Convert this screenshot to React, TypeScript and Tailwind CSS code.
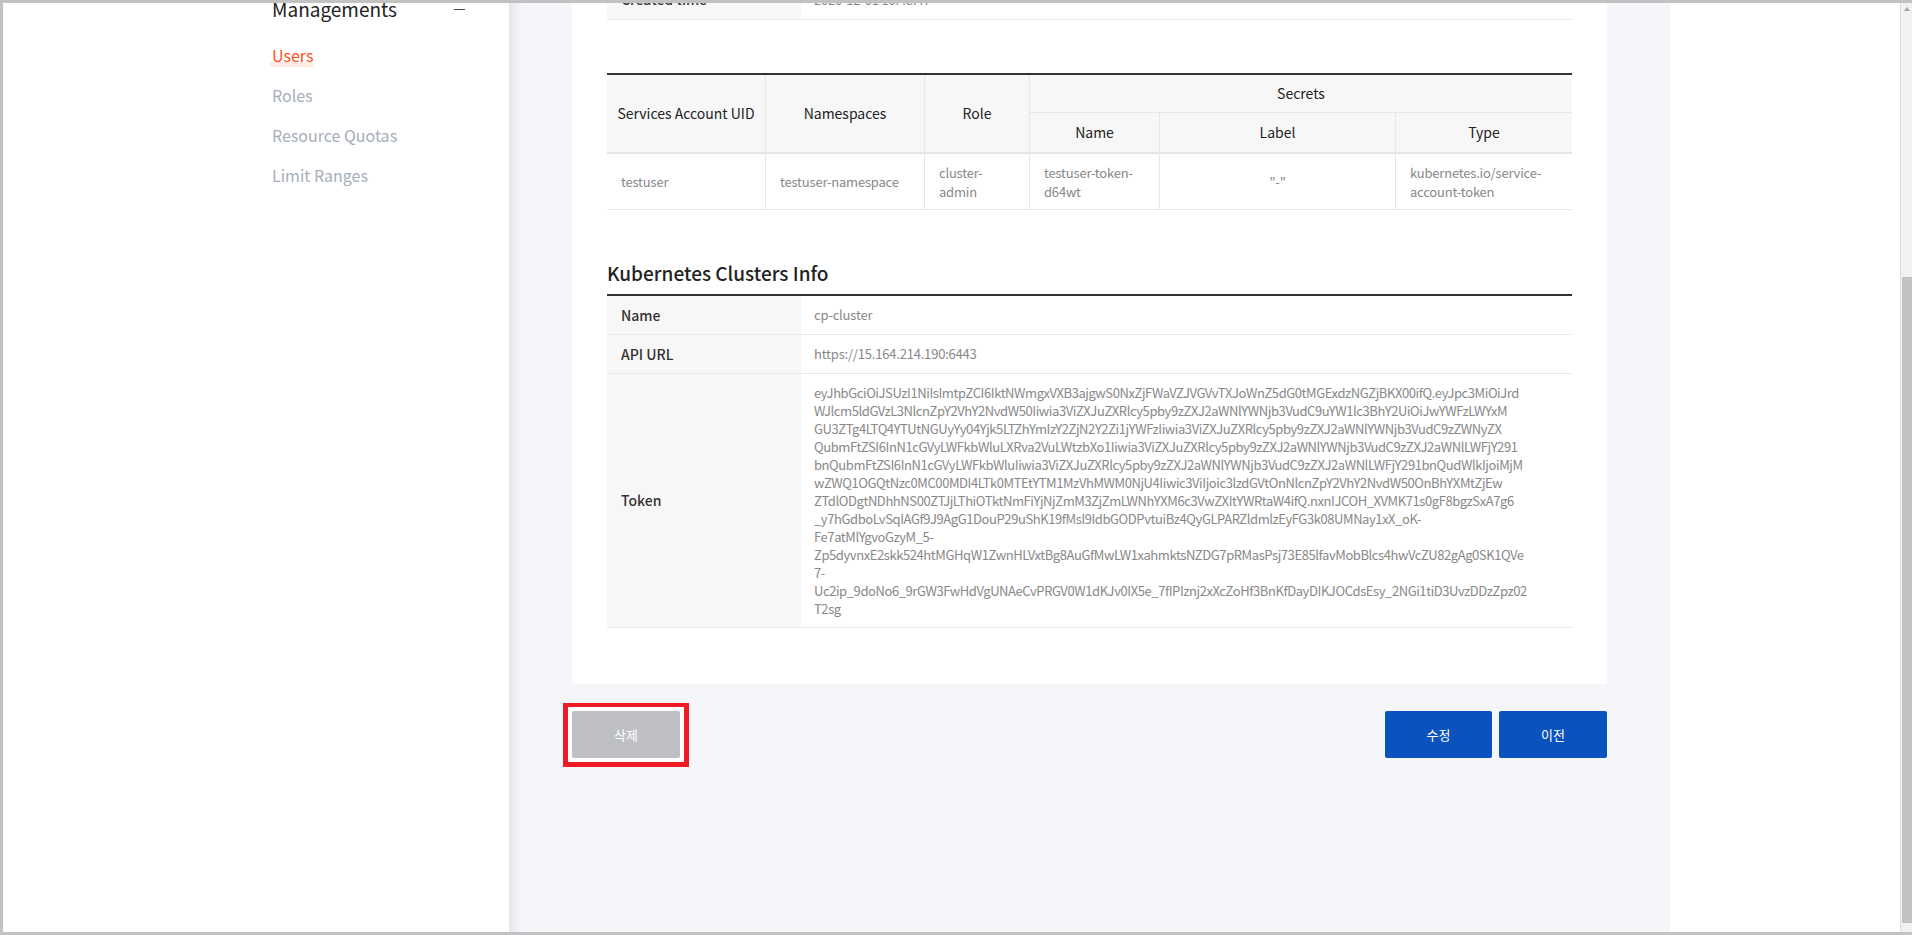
import React from 'react';

// token as it wraps in the cell
const TOKEN_LINES = [
  'eyJhbGciOiJSUzI1NiIsImtpZCI6IktNWmgxVXB3ajgwS0NxZjFWaVZJVGVvTXJoWnZ5dG0tMGExdzNGZjBKX00ifQ.eyJpc3MiOiJrd',
  'WJlcm5ldGVzL3NlcnZpY2VhY2NvdW50Iiwia3ViZXJuZXRlcy5pby9zZXJ2aWNlYWNjb3VudC9uYW1lc3BhY2UiOiJwYWFzLWYxM',
  'GU3ZTg4LTQ4YTUtNGUyYy04Yjk5LTZhYmIzY2ZjN2Y2Zi1jYWFzIiwia3ViZXJuZXRlcy5pby9zZXJ2aWNlYWNjb3VudC9zZWNyZX',
  'QubmFtZSI6InN1cGVyLWFkbWluLXRva2VuLWtzbXo1Iiwia3ViZXJuZXRlcy5pby9zZXJ2aWNlYWNjb3VudC9zZXJ2aWNlLWFjY291',
  'bnQubmFtZSI6InN1cGVyLWFkbWluIiwia3ViZXJuZXRlcy5pby9zZXJ2aWNlYWNjb3VudC9zZXJ2aWNlLWFjY291bnQudWlkIjoiMjM',
  'wZWQ1OGQtNzc0MC00MDI4LTk0MTEtYTM1MzVhMWM0NjU4Iiwic3ViIjoic3lzdGVtOnNlcnZpY2VhY2NvdW50OnBhYXMtZjEw',
  'ZTdlODgtNDhhNS00ZTJjLThiOTktNmFiYjNjZmM3ZjZmLWNhYXM6c3VwZXItYWRtaW4ifQ.nxnIJCOH_XVMK71s0gF8bgzSxA7g6',
  '_y7hGdboLvSqIAGf9J9AgG1DouP29uShK19fMsl9IdbGODPvtuiBz4QyGLPARZldmlzEyFG3k08UMNay1xX_oK-',
  'Fe7atMlYgvoGzyM_5-',
  'Zp5dyvnxE2skk524htMGHqW1ZwnHLVxtBg8AuGfMwLW1xahmktsNZDG7pRMasPsj73E85lfavMobBlcs4hwVcZU82gAg0SK1QVe',
  '7-',
  'Uc2ip_9doNo6_9rGW3FwHdVgUNAeCvPRGV0W1dKJv0IX5e_7fIPIznj2xXcZoHf3BnKfDayDIKJOCdsEsy_2NGi1tiD3UvzDDzZpz02',
  'T2sg',
];

const menu = ['Users', 'Roles', 'Resource Quotas', 'Limit Ranges'];

const Sidebar = () => (
  <aside className="w-[506px] shrink-0 bg-white pl-[269px]">
    <div className="w-[194px] -mt-[8px] h-[28px] flex items-center justify-between">
      <span className="text-[19px] leading-[28px] text-[#222]">Managements</span>
      <span className="w-[11px] h-px bg-[#444] mr-[1px]" />
    </div>
    <ul className="mt-[12px]">
      {menu.map((item, i) => (
        <li key={item} className="h-[40px] flex items-center text-[16px]">
          {i === 0 ? (
            <span className="-ml-[2px] pl-[2px] text-[#ff4f1f] bg-[linear-gradient(to_bottom,transparent_78%,#ffe9e1_78%)]">
              {item}
            </span>
          ) : (
            <span className="text-[#a6adb9]">{item}</span>
          )}
        </li>
      ))}
    </ul>
  </aside>
);

const th = 'bg-[#f7f7f7] flex items-center justify-center text-center text-[14px] text-[#222] border-[#e6e6e6]';
const td = 'flex items-center pl-[14px] pr-[14px] text-[13px] tracking-[-0.2px] leading-[19px] text-[#888] border-[#e6e6e6] border-b';

const AccountTable = () => (
  <div className="mt-[53px] border-t-2 border-[#333] grid grid-cols-[159px_159px_105px_130px_236px_1fr] grid-rows-[38px_41px_56px]">
    <div className={`${th} row-span-2 border-r border-b-2`}>Services Account UID</div>
    <div className={`${th} row-span-2 border-r border-b-2`}>Namespaces</div>
    <div className={`${th} row-span-2 border-r border-b-2`}>Role</div>
    <div className={`${th} col-span-3 border-b`}>Secrets</div>
    <div className={`${th} border-r border-b-2`}>Name</div>
    <div className={`${th} border-r border-b-2`}>Label</div>
    <div className={`${th} border-b-2`}>Type</div>
    <div className={`${td} border-r`}>testuser</div>
    <div className={`${td} border-r`}>testuser-namespace</div>
    <div className={`${td} border-r pr-[22px]`}>cluster-admin</div>
    <div className={`${td} border-r`}>testuser-token-d64wt</div>
    <div className={`${td} border-r justify-center`}>"-"</div>
    <div className={td}>kubernetes.io/service-account-token</div>
  </div>
);

const InfoRow = ({ label, children, className = '' }: { label: string; children: React.ReactNode; className?: string }) => (
  <div className={`grid grid-cols-[194px_1fr] border-b border-[#e8e8e8] ${className}`}>
    <div className="bg-[#f7f7f7] flex items-center pl-[14px] text-[14px] font-medium text-[#333]">{label}</div>
    <div className="flex items-center pl-[13px] text-[13px] tracking-[-0.2px] text-[#888]">{children}</div>
  </div>
);

const ClusterInfo = () => (
  <>
    <h3 className="mt-[49px] mb-[7px] text-[19px] leading-[28px] font-medium text-[#222]">Kubernetes Clusters Info</h3>
    <div className="border-t-2 border-[#333]">
      <InfoRow label="Name" className="h-[39px]">cp-cluster</InfoRow>
      <InfoRow label="API URL" className="h-[39px]">https://15.164.214.190:6443</InfoRow>
      <InfoRow label="Token">
        <div className="pt-[10px] pb-[9px] text-[13px] leading-[18px] tracking-[-0.42px]">
          {TOKEN_LINES.map((line, i) => (
            <div key={i} className="whitespace-nowrap">{line}</div>
          ))}
        </div>
      </InfoRow>
    </div>
  </>
);

const Scrollbar = () => (
  <div className="w-[12px] shrink-0 bg-[#f1f1f1] border-l border-[#dcdcdc] flex flex-col items-center">
    <div className="mt-[4px] w-0 h-0 border-l-[3px] border-r-[3px] border-b-[4px] border-l-transparent border-r-transparent border-b-[#a3a3a3]" />
    <div className="mt-[266px] w-[10px] h-[646px] bg-[#c1c1c1]" />
  </div>
);

export default function App() {
  return (
    <div className="w-[1912px] h-[935px] overflow-hidden flex border-t-[3px] border-l-[3px] border-b-[3px] border-[#c2c2c2] bg-white font-['Noto_Sans_CJK_KR',sans-serif]">
      <Sidebar />
      <main className="w-[1161px] shrink-0 pl-[63px] bg-[linear-gradient(to_right,#e6e7ec,#f5f6fa_12px)]">
        <section className="w-[1035px] -mt-[23px] bg-white px-[35px] pb-[56px]">
          <InfoRow label="Created time" className="h-[40px]">2020-12-01 10:48:47</InfoRow>
          <AccountTable />
          <ClusterInfo />
        </section>
        <div className="w-[1035px] mt-[27px] flex justify-between">
          <div className="relative">
            <button className="w-[108px] h-[47px] rounded-[2px] bg-[#bfc0c5] text-white text-[13px] shadow-[0_0_0_4px_#fff]">삭제</button>
            <div className="absolute -left-[9px] -right-[9px] -top-[8px] -bottom-[9px] border-[5px] border-t-[4px] border-[#ed1c24] pointer-events-none" />
          </div>
          <div className="flex gap-[7px]">
            <button className="w-[107px] h-[47px] rounded-[2px] bg-[#0a52bd] text-white text-[13px]">수정</button>
            <button className="w-[108px] h-[47px] rounded-[2px] bg-[#0a52bd] text-white text-[13px]">이전</button>
          </div>
        </div>
      </main>
      <div className="w-[230px] shrink-0 bg-white" />
      <Scrollbar />
    </div>
  );
}
